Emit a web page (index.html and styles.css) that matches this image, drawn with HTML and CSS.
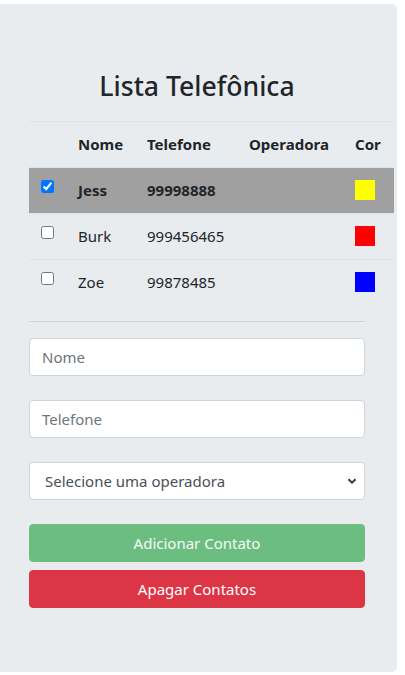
FILE: index.html
```html
<!DOCTYPE html>
<html lang="pt-BR">
<head>
<meta charset="utf-8">
<title>Lista Telefônica</title>
<link rel="stylesheet" href="styles.css">
</head>
<body>
<div class="jumbo">
  <h2 class="title">Lista Telefônica</h2>
  <table class="tbl">
    <colgroup>
      <col class="c-check"><col class="c-nome"><col class="c-tel"><col class="c-op"><col class="c-cor">
    </colgroup>
    <thead>
      <tr><th></th><th>Nome</th><th>Telefone</th><th>Operadora</th><th>Cor</th></tr>
    </thead>
    <tbody>
      <tr class="selected">
        <td><input class="chk" type="checkbox" checked></td>
        <td>Jess</td><td>99998888</td><td></td>
        <td><div class="swatch sw-yellow"></div></td>
      </tr>
      <tr>
        <td><input class="chk" type="checkbox"></td>
        <td>Burk</td><td>999456465</td><td></td>
        <td><div class="swatch sw-red"></div></td>
      </tr>
      <tr>
        <td><input class="chk" type="checkbox"></td>
        <td>Zoe</td><td>99878485</td><td></td>
        <td><div class="swatch sw-blue"></div></td>
      </tr>
    </tbody>
  </table>
  <hr class="sep">
  <form class="form">
    <input class="field" type="text" placeholder="Nome">
    <input class="field" type="text" placeholder="Telefone">
    <div class="select-wrap">
      <select class="field select">
        <option>Selecione uma operadora</option>
      </select>
      <svg class="chev" width="10" height="8" viewBox="0 0 10 8"><path d="M1.5 2.2 L5 5.6 L8.5 2.2" fill="none" stroke="#343a40" stroke-width="2"/></svg>
    </div>
    <div class="actions">
      <button type="button" class="btn btn-success" disabled>Adicionar Contato</button>
      <button type="button" class="btn btn-danger">Apagar Contatos</button>
    </div>
  </form>
</div>
</body>
</html>
```
FILE: styles.css
```css
* { box-sizing: border-box; }
html, body { margin: 0; padding: 0; background: #fff; }
body {
  font-family: "Noto Sans", "Open Sans", sans-serif;
  font-size: 15px;
  color: #212529;
}
.jumbo {
  margin-top: 4px;
  width: 397px;
  height: 668px;
  background: #e9ecef;
  border-radius: 0 5px 5px 0;
  padding: 64px 32px 64px 29px;
}
.title {
  margin: 0 0 17px;
  text-align: center;
  font-size: 26.6px;
  font-weight: 500;
  line-height: 36px;
  color: #212529;
}
.tbl {
  width: 365px;
  table-layout: fixed;
  border-collapse: collapse;
}
.c-check { width: 37px; }
.c-nome { width: 69px; }
.c-tel { width: 102px; }
.c-op { width: 106px; }
.c-cor { width: 51px; }
.tbl th, .tbl td {
  padding: 12px;
  line-height: 21px;
  text-align: left;
  vertical-align: top;
  white-space: nowrap;
}
.tbl th {
  font-weight: 700;
  border-top: 1px solid #dee2e6;
  border-bottom: 1px solid #dee2e6;
}
.tbl tbody tr + tr td { border-top: 1px solid #dee2e6; }
.tbl tr.selected td { background: #a0a0a0; font-weight: 700; }
.chk { display: block; margin: 0; width: 13px; height: 13px; }
.swatch { width: 20px; height: 20px; }
.sw-yellow { background: #ffff00; }
.sw-red { background: #ff0000; }
.sw-blue { background: #0000ff; }
.sep {
  margin: 16px 0;
  border: 0;
  border-top: 1px solid rgba(0, 0, 0, 0.1);
}
.form { display: flex; flex-direction: column; gap: 24px; }
.field {
  display: block;
  width: 100%;
  height: 38px;
  padding: 6px 12px;
  font-family: inherit;
  font-size: 15px;
  line-height: 24px;
  color: #495057;
  background: #fff;
  border: 1px solid #ced4da;
  border-radius: 4px;
  outline: none;
}
.field::placeholder { color: #6c757d; opacity: 1; }
.select-wrap { position: relative; }
.select {
  appearance: none;
  -webkit-appearance: none;
  padding-left: 15px;
  padding-right: 30px;
}
.chev { position: absolute; right: 8px; top: 15px; pointer-events: none; }
.actions { display: flex; flex-direction: column; gap: 8px; }
.btn {
  display: block;
  width: 100%;
  height: 38px;
  border: 1px solid transparent;
  border-radius: 4px;
  font-family: inherit;
  font-size: 15px;
  line-height: 24px;
  color: #fff;
  padding: 6px 12px;
}
.btn-success { background: #28a745; border-color: #28a745; opacity: 0.65; }
.btn-danger { background: #dc3545; border-color: #dc3545; }
```
